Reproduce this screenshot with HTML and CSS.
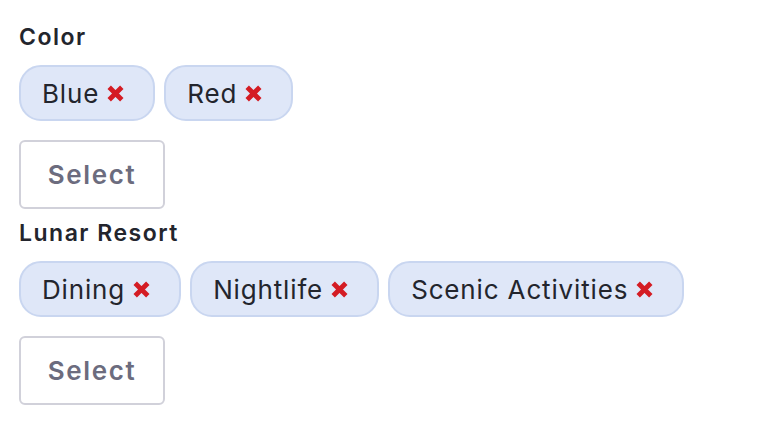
FILE: index.html
```html
<!DOCTYPE html>
<html lang="en">
<head>
  <meta charset="UTF-8" />
  <title>Multi select</title>
  <link rel="stylesheet" href="styles.css">
</head>
<body>
  <div class="container">
    <!-- Color field -->
    <div class="field">
      <div class="field-label">Color</div>
      <div class="chips">
        <span class="chip">Blue <svg class="chip-remove" viewBox="0 0 20 20"><path d="M4 4 L16 16 M16 4 L4 16"/></svg></span>
        <span class="chip">Red <svg class="chip-remove" viewBox="0 0 20 20"><path d="M4 4 L16 16 M16 4 L4 16"/></svg></span>
      </div>
      <button class="btn-select">Select</button>
    </div>

    <!-- Lunar Resort field -->
    <div class="field">
      <div class="field-label">Lunar Resort</div>
      <div class="chips">
        <span class="chip">Dining <svg class="chip-remove" viewBox="0 0 20 20"><path d="M4 4 L16 16 M16 4 L4 16"/></svg></span>
        <span class="chip">Nightlife <svg class="chip-remove" viewBox="0 0 20 20"><path d="M4 4 L16 16 M16 4 L4 16"/></svg></span>
        <span class="chip">Scenic Activities <svg class="chip-remove" viewBox="0 0 20 20"><path d="M4 4 L16 16 M16 4 L4 16"/></svg></span>
      </div>
      <button class="btn-select">Select</button>
    </div>
  </div>
</body>
</html>
```

FILE: styles.css
```css
/*
  Reset and fonts
*/
* {
  box-sizing: border-box;
  margin: 0;
  padding: 0;
}
body {
  background: #ffffff;
  font-family: Inter, "Noto Sans", sans-serif;
  color: #23252d;
}
.container {
  padding: 23px 19px;
}
/*
  One field: label, chips, select button
*/
.field-label {
  font-size: 23px;
  font-weight: 600;
  letter-spacing: 1.5px;
  line-height: 28px;
  margin-bottom: 14px;
}
.chips {
  display: flex;
  flex-wrap: wrap;
  gap: 9px;
  margin-bottom: 19px;
}
.chip {
  display: inline-flex;
  align-items: center;
  height: 56px;
  padding: 0 27px 0 21px;
  background-color: #dfe7f8;
  border: 2px solid #c9d6f0;
  border-radius: 22px;
  font-size: 26px;
  letter-spacing: 0.85px;
}
.chip-remove {
  width: 21px;
  height: 21px;
  margin-left: 6px;
  fill: none;
  stroke: #d41c24;
  stroke-width: 4.6;
}
.btn-select {
  display: block;
  width: 146px;
  height: 69px;
  background: #ffffff;
  border: 2px solid #d1d1da;
  border-radius: 6px;
  font-family: inherit;
  font-size: 26px;
  font-weight: 600;
  letter-spacing: 1.6px;
  color: #6c6c7e;
  margin-bottom: 10px;
}
```
